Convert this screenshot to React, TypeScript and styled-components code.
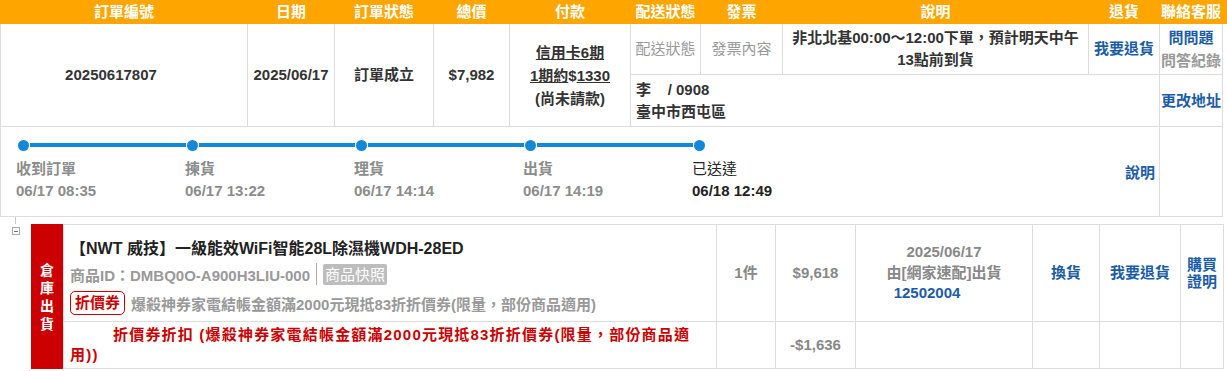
import React from "react";
import styled, { createGlobalStyle } from "styled-components";

const Global = createGlobalStyle`
  html, body { margin: 0; padding: 0; background: #fff; }
  body {
    font-family: "Liberation Sans", "Noto Sans CJK TC", sans-serif;
    font-size: 15px;
    color: #333;
  }
`;

const ORANGE = "#ffa500";
const LINE = "#dddddd";
const BLUE = "#1b5ca8";
const RED = "#cc0000";
const TRACK = "#1488d8";

const COLS = "246px 86px 98px 75px 120px 69px 81px 305px 70px 62px";

const Page = styled.div`
  width: 1227px;
`;

const HeaderBar = styled.div`
  display: grid;
  grid-template-columns: ${COLS};
  column-gap: 1px;
  padding: 0 1px;
  height: 24px;
  background: ${ORANGE};
`;

const HeadCell = styled.div`
  color: #fff;
  font-weight: bold;
  font-size: 15px;
  line-height: 24px;
  text-align: center;
  white-space: nowrap;
`;

const OrderGrid = styled.div`
  display: grid;
  grid-template-columns: ${COLS};
  grid-template-rows: 50px 51px 89px;
  gap: 1px;
  padding: 0 1px 1px;
  background: ${LINE};
  width: max-content;
`;

const Cell = styled.div<{ $col: string; $row: string; $left?: boolean; $lh?: number }>`
  grid-column: ${(p) => p.$col};
  grid-row: ${(p) => p.$row};
  background: #fff;
  display: flex;
  flex-direction: column;
  justify-content: center;
  align-items: ${(p) => (p.$left ? "flex-start" : "center")};
  text-align: ${(p) => (p.$left ? "left" : "center")};
  padding: ${(p) => (p.$left ? "0 5px" : "0")};
  line-height: ${(p) => p.$lh ?? 22}px;
  font-size: 15px;
  white-space: nowrap;
`;

const Strong = styled.span<{ $tone?: "dark" | "gray" | "light" }>`
  font-weight: bold;
  color: ${(p) => (p.$tone === "gray" ? "#888" : p.$tone === "light" ? "#999" : "#333")};
`;

const Muted = styled.span`
  color: #999;
`;

const Link = styled.span`
  color: ${BLUE};
  font-weight: bold;
`;

const Underlined = styled.span`
  text-decoration: underline;
`;

const Nudge = styled.span<{ $shift: number }>`
  display: inline-block;
  margin-right: ${(p) => p.$shift}px;
`;

const Address = styled.span`
  font-weight: bold;
  color: #333;
  white-space: pre;
`;

/* progress */
const ProgressCell = styled.div`
  grid-column: 1 / 10;
  grid-row: 3;
  background: #fff;
  display: flex;
  align-items: flex-start;
  justify-content: space-between;
  padding: 12.5px 4px 0 15px;
`;

const Steps = styled.div`
  display: flex;
`;

const Step = styled.div<{ $last?: boolean }>`
  width: ${(p) => (p.$last ? "auto" : "169px")};
  display: flex;
  flex-direction: column;
`;

const Track = styled.div`
  display: flex;
  align-items: center;
  height: 11px;
`;

const Dot = styled.span`
  width: 11px;
  height: 11px;
  border-radius: 50%;
  background: ${TRACK};
  margin-left: 1.5px;
  flex: none;
`;

const Bar = styled.span`
  flex: 1;
  height: 4px;
  margin: 0 -1px 0 1.5px;
  background: ${TRACK};
`;

const StepName = styled.div<{ $current?: boolean }>`
  margin-top: 7.5px;
  line-height: 22px;
  font-size: 15px;
  font-weight: ${(p) => (p.$current ? "normal" : "bold")};
  color: ${(p) => (p.$current ? "#222" : "#8c8c8c")};
  white-space: nowrap;
`;

const StepTime = styled.div<{ $current?: boolean }>`
  line-height: 22px;
  font-size: 15px;
  font-weight: bold;
  color: ${(p) => (p.$current ? "#222" : "#8c8c8c")};
  white-space: nowrap;
`;

const ProgressLink = styled(Link)`
  align-self: center;
  margin-top: -12.5px;
`;

/* product */
const Connector = styled.div`
  height: 7px;
  margin-left: 15px;
  border-left: 1px solid #c8c8c8;
`;

const ProductSection = styled.div`
  display: flex;
  align-items: stretch;
`;

const TreeCol = styled.div`
  width: 31px;
  flex: none;
`;

const MinusBox = styled.div`
  box-sizing: border-box;
  width: 8px;
  height: 8px;
  margin: 3px 0 0 12px;
  border: 1px solid #aaa;
  display: flex;
  align-items: center;
  justify-content: center;
  &::after {
    content: "";
    width: 4px;
    height: 1px;
    background: #777;
  }
`;

const RedTag = styled.div`
  width: 32px;
  flex: none;
  background: ${RED};
  color: #fff;
  font-weight: bold;
  font-size: 14px;
  line-height: 18px;
  display: flex;
  flex-direction: column;
  justify-content: center;
  align-items: center;
`;

const ProductGrid = styled.div`
  display: grid;
  grid-template-columns: 652px 58px 79px 176px 66px 80px 42px;
  grid-template-rows: 96px 46px;
  gap: 1px;
  padding: 1px;
  background: ${LINE};
`;

const PCell = styled.div<{ $lh?: number }>`
  background: #fff;
  display: flex;
  flex-direction: column;
  justify-content: center;
  align-items: center;
  text-align: center;
  font-size: 15px;
  line-height: ${(p) => p.$lh ?? 22}px;
`;

const InfoCell = styled.div`
  background: #fff;
  padding: 12px 6px 0;
`;

const Title = styled.div`
  font-size: 16px;
  font-weight: bold;
  line-height: 24px;
  color: #222;
  white-space: nowrap;
`;

const IdLine = styled.div`
  display: flex;
  align-items: center;
  height: 26px;
  color: #999;
  font-weight: bold;
  white-space: nowrap;
`;

const Divider = styled.span`
  width: 1px;
  height: 22px;
  background: #aaa;
  margin: 0 6px;
`;

const SnapBadge = styled.span`
  background: #bdbdbd;
  color: #fff;
  font-weight: normal;
  padding: 0 2px;
  line-height: 21px;
  border-radius: 2px;
`;

const CouponLine = styled.div`
  display: flex;
  align-items: center;
  height: 32px;
  gap: 6px;
  white-space: nowrap;
`;

const CouponBadge = styled.span`
  border: 1px solid ${RED};
  border-radius: 5px;
  color: ${RED};
  font-weight: bold;
  padding: 0 4px;
  line-height: 22px;
`;

const DiscountCell = styled.div`
  background: #fff;
  display: flex;
  align-items: center;
  padding: 0 6px;
`;

const DiscountText = styled.div`
  color: ${RED};
  font-weight: bold;
  font-size: 15px;
  letter-spacing: 1.2px;
  line-height: 20px;
  text-indent: 43px;
  white-space: nowrap;
`;

const Blank = styled.div`
  background: #fff;
`;

const headers = ["訂單編號", "日期", "訂單狀態", "總價", "付款", "配送狀態", "發票", "說明", "退貨", "聯絡客服"];

const steps = [
  { name: "收到訂單", time: "06/17 08:35" },
  { name: "揀貨", time: "06/17 13:22" },
  { name: "理貨", time: "06/17 14:14" },
  { name: "出貨", time: "06/17 14:19" },
  { name: "已送達", time: "06/18 12:49" },
];

export default function App() {
  return (
    <Page>
      <Global />
      <HeaderBar>
        {headers.map((h) => (
          <HeadCell key={h}>{h}</HeadCell>
        ))}
      </HeaderBar>
      <OrderGrid>
        <Cell $col="1" $row="1 / 3">
          <Strong>
            <Nudge $shift={26}>20250617807</Nudge>
          </Strong>
        </Cell>
        <Cell $col="2" $row="1 / 3">
          <Strong>2025/06/17</Strong>
        </Cell>
        <Cell $col="3" $row="1 / 3">
          <Strong>訂單成立</Strong>
        </Cell>
        <Cell $col="4" $row="1 / 3">
          <Strong>$7,982</Strong>
        </Cell>
        <Cell $col="5" $row="1 / 3" $lh={23}>
          <Strong>
            <Underlined>信用卡6期</Underlined>
          </Strong>
          <Strong>
            <Underlined>1期約</Underlined>$<Underlined>1330</Underlined>
          </Strong>
          <Strong>(尚未請款)</Strong>
        </Cell>
        <Cell $col="6" $row="1">
          <Muted>配送狀態</Muted>
        </Cell>
        <Cell $col="7" $row="1">
          <Muted>發票內容</Muted>
        </Cell>
        <Cell $col="8" $row="1">
          <Strong>非北北基00:00～12:00下單，預計明天中午</Strong>
          <Strong>13點前到貨</Strong>
        </Cell>
        <Cell $col="9" $row="1">
          <Link>我要退貨</Link>
        </Cell>
        <Cell $col="10" $row="1" $lh={23}>
          <Link>問問題</Link>
          <Strong $tone="light">問答紀錄</Strong>
        </Cell>
        <Cell $col="6 / 10" $row="2" $left>
          <Address>{"李    / 0908"}</Address>
          <Address>臺中市西屯區</Address>
        </Cell>
        <Cell $col="10" $row="2">
          <Link>更改地址</Link>
        </Cell>
        <ProgressCell>
          <Steps>
            {steps.map((s, i) => {
              const last = i === steps.length - 1;
              return (
                <Step key={s.name} $last={last}>
                  <Track>
                    <Dot />
                    {!last && <Bar />}
                  </Track>
                  <StepName $current={last}>{s.name}</StepName>
                  <StepTime $current={last}>{s.time}</StepTime>
                </Step>
              );
            })}
          </Steps>
          <ProgressLink>說明</ProgressLink>
        </ProgressCell>
        <Cell $col="10" $row="3" />
      </OrderGrid>

      <Connector />
      <ProductSection>
        <TreeCol>
          <MinusBox />
        </TreeCol>
        <RedTag>
          <span>倉</span>
          <span>庫</span>
          <span>出</span>
          <span>貨</span>
        </RedTag>
        <ProductGrid>
          <InfoCell>
            <Title>【NWT 威技】一級能效WiFi智能28L除濕機WDH-28ED</Title>
            <IdLine>
              商品ID：DMBQ0O-A900H3LIU-000
              <Divider />
              <SnapBadge>商品快照</SnapBadge>
            </IdLine>
            <CouponLine>
              <CouponBadge>折價券</CouponBadge>
              <Strong $tone="light">爆殺神券家電結帳金額滿2000元現抵83折折價券(限量，部份商品適用)</Strong>
            </CouponLine>
          </InfoCell>
          <PCell>
            <Strong $tone="gray">1件</Strong>
          </PCell>
          <PCell>
            <Strong $tone="gray">$9,618</Strong>
          </PCell>
          <PCell $lh={20.5}>
            <Strong $tone="gray">2025/06/17</Strong>
            <Strong $tone="gray">由[網家速配]出貨</Strong>
            <Link>
              <Nudge $shift={34}>12502004</Nudge>
            </Link>
          </PCell>
          <PCell>
            <Link>換貨</Link>
          </PCell>
          <PCell>
            <Link>我要退貨</Link>
          </PCell>
          <PCell $lh={17}>
            <Link>購買</Link>
            <Link>證明</Link>
          </PCell>

          <DiscountCell>
            <DiscountText>
              折價券折扣 (爆殺神券家電結帳金額滿2000元現抵83折折價券(限量，部份商品適
              <br />
              用))
            </DiscountText>
          </DiscountCell>
          <Blank />
          <PCell>
            <Strong $tone="gray">-$1,636</Strong>
          </PCell>
          <Blank />
          <Blank />
          <Blank />
          <Blank />
        </ProductGrid>
      </ProductSection>
    </Page>
  );
}
